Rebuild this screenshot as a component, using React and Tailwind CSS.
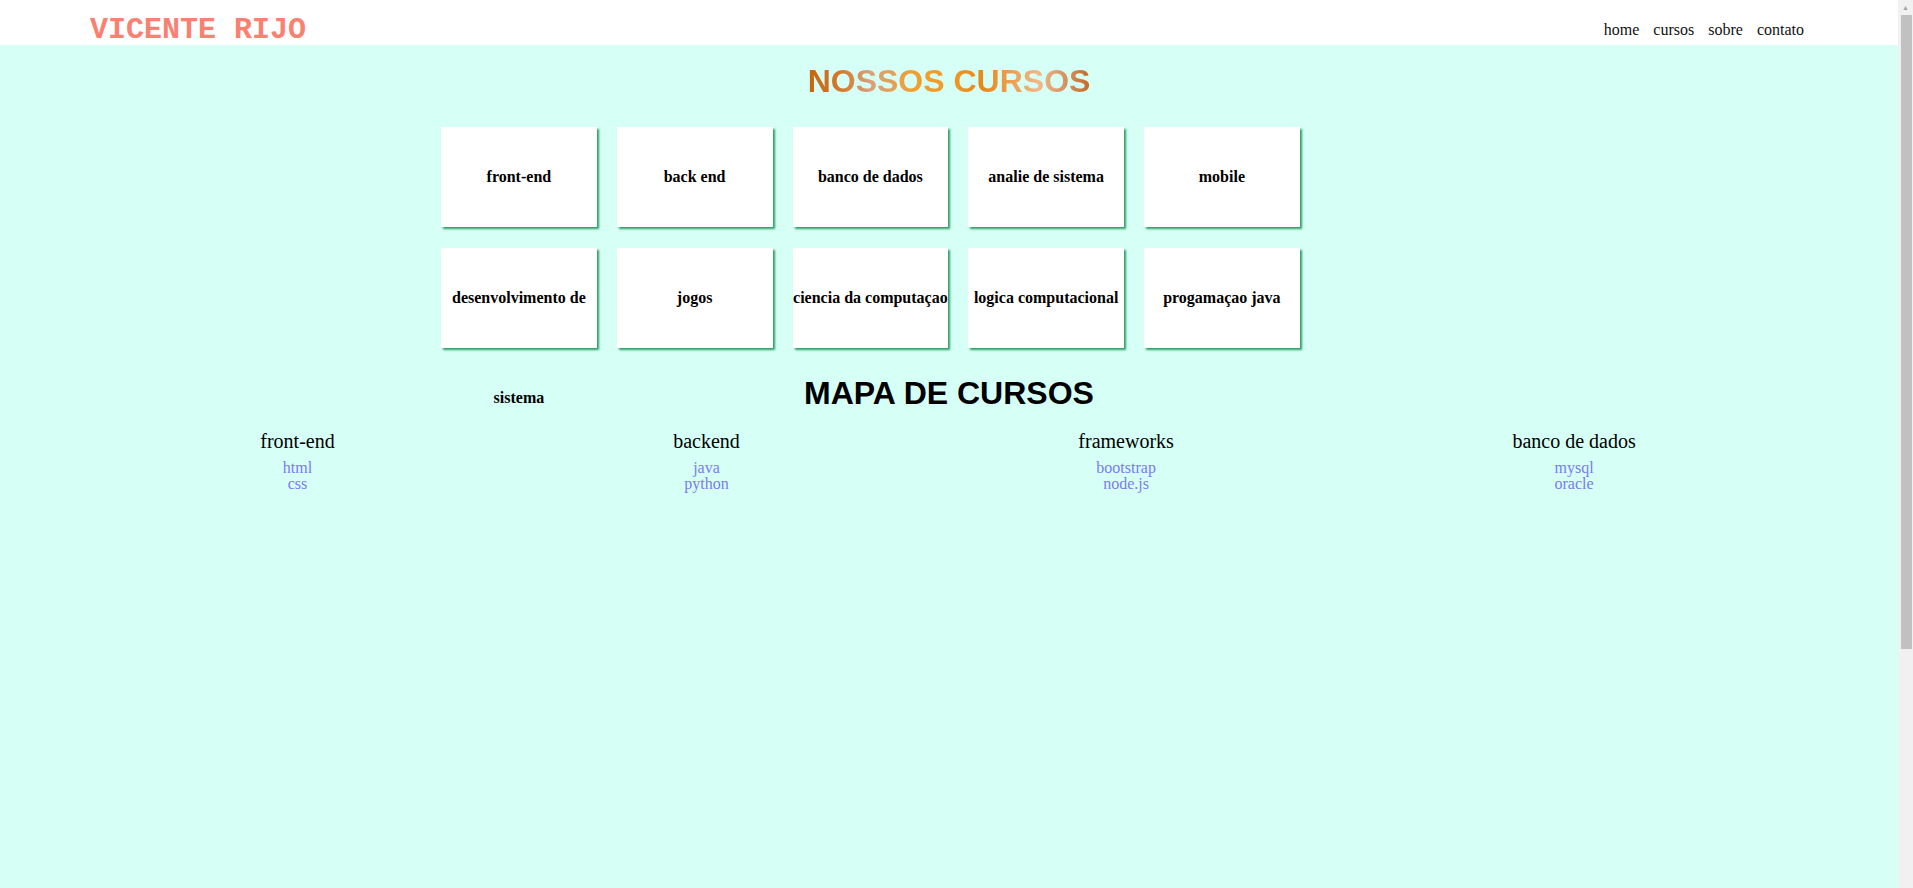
const CURSOS = [
  "front-end",
  "back end",
  "banco de dados",
  "analie de sistema",
  "mobile",
  "desenvolvimento de sistema",
  "jogos",
  "ciencia da computaçao",
  "logica computacional",
  "progamaçao java",
];

const MAPA = [
  { titulo: "front-end", itens: ["html", "css"] },
  { titulo: "backend", itens: ["java", "python"] },
  { titulo: "frameworks", itens: ["bootstrap", "node.js"] },
  { titulo: "banco de dados", itens: ["mysql", "oracle"] },
];

function Header() {
  return (
    <header className="flex h-[45px] items-start justify-between bg-white pl-[90px] pr-[94px]">
      <h1 className="mt-[13px] font-['Liberation_Mono',monospace] text-[30px] font-bold leading-[34px] text-[#fa8072]">
        VICENTE RIJO
      </h1>
      <nav className="mt-[21px] flex gap-[14px] font-['Liberation_Serif',serif] text-base leading-[18px] text-[#111]">
        <a href="#">home</a>
        <a href="#">cursos</a>
        <a href="#">sobre</a>
        <a href="#">contato</a>
      </nav>
    </header>
  );
}

function Card({ nome }) {
  return (
    <div className="m-[10px] my-[10.5px] h-[100px] w-[155.75px] bg-white text-center font-['Liberation_Serif',serif] text-base font-bold leading-[100px] text-black shadow-[2px_2px_2px_#2e9e65]">
      {nome}
    </div>
  );
}

// fake page scrollbar, the reference shows the browser's one
function Scrollbar() {
  return (
    <aside className="flex w-[15px] shrink-0 flex-col bg-[#f1f1f1]">
      <div className="flex h-[15px] items-center justify-center text-[7px] leading-none text-[#a3a3a3]">▲</div>
      <div className="ml-[3px] mr-[1px] h-[634px] bg-[#c1c1c1]" />
    </aside>
  );
}

export default function App() {
  return (
    <div className="flex h-[888px] overflow-hidden">
      <div className="w-[1898px] shrink-0 bg-[#d6fff6]">
        <Header />
        <main>
          <h2 className="pt-[18px] text-center font-['Liberation_Sans',Arial,sans-serif] text-[32px] font-bold leading-[36px]">
            <span className="inline-block bg-[linear-gradient(to_right,#c8650a_0%,#d47a30_12%,#d8a07c_22%,#f0a030_38%,#f09a28_50%,#e8881a_62%,#f0b888_82%,#d89868_90%,#c46a2a_100%)] bg-clip-text text-transparent">
              NOSSOS CURSOS
            </span>
          </h2>

          <section className="mx-auto mt-[17px] flex h-[242px] w-[1036px] flex-wrap content-start">
            {CURSOS.map((c) => (
              <Card key={c} nome={c} />
            ))}
          </section>

          <h2 className="mt-[17px] text-center font-['Liberation_Sans',Arial,sans-serif] text-[32px] font-bold leading-[36px] text-black">
            MAPA DE CURSOS
          </h2>

          <section className="mt-[17.5px] flex justify-around pl-[91px] pr-[93px] font-['Liberation_Serif',serif]">
            {MAPA.map((col) => (
              <div key={col.titulo} className="flex flex-col items-center">
                <h3 className="text-xl leading-[24px] text-black">{col.titulo}</h3>
                <ul className="mt-[7px] text-center text-base leading-[16px]">
                  {col.itens.map((i) => (
                    <li key={i}>
                      <a href="#" className="text-[#7b7bf0]">{i}</a>
                    </li>
                  ))}
                </ul>
              </div>
            ))}
          </section>
        </main>
      </div>
      <Scrollbar />
    </div>
  );
}
